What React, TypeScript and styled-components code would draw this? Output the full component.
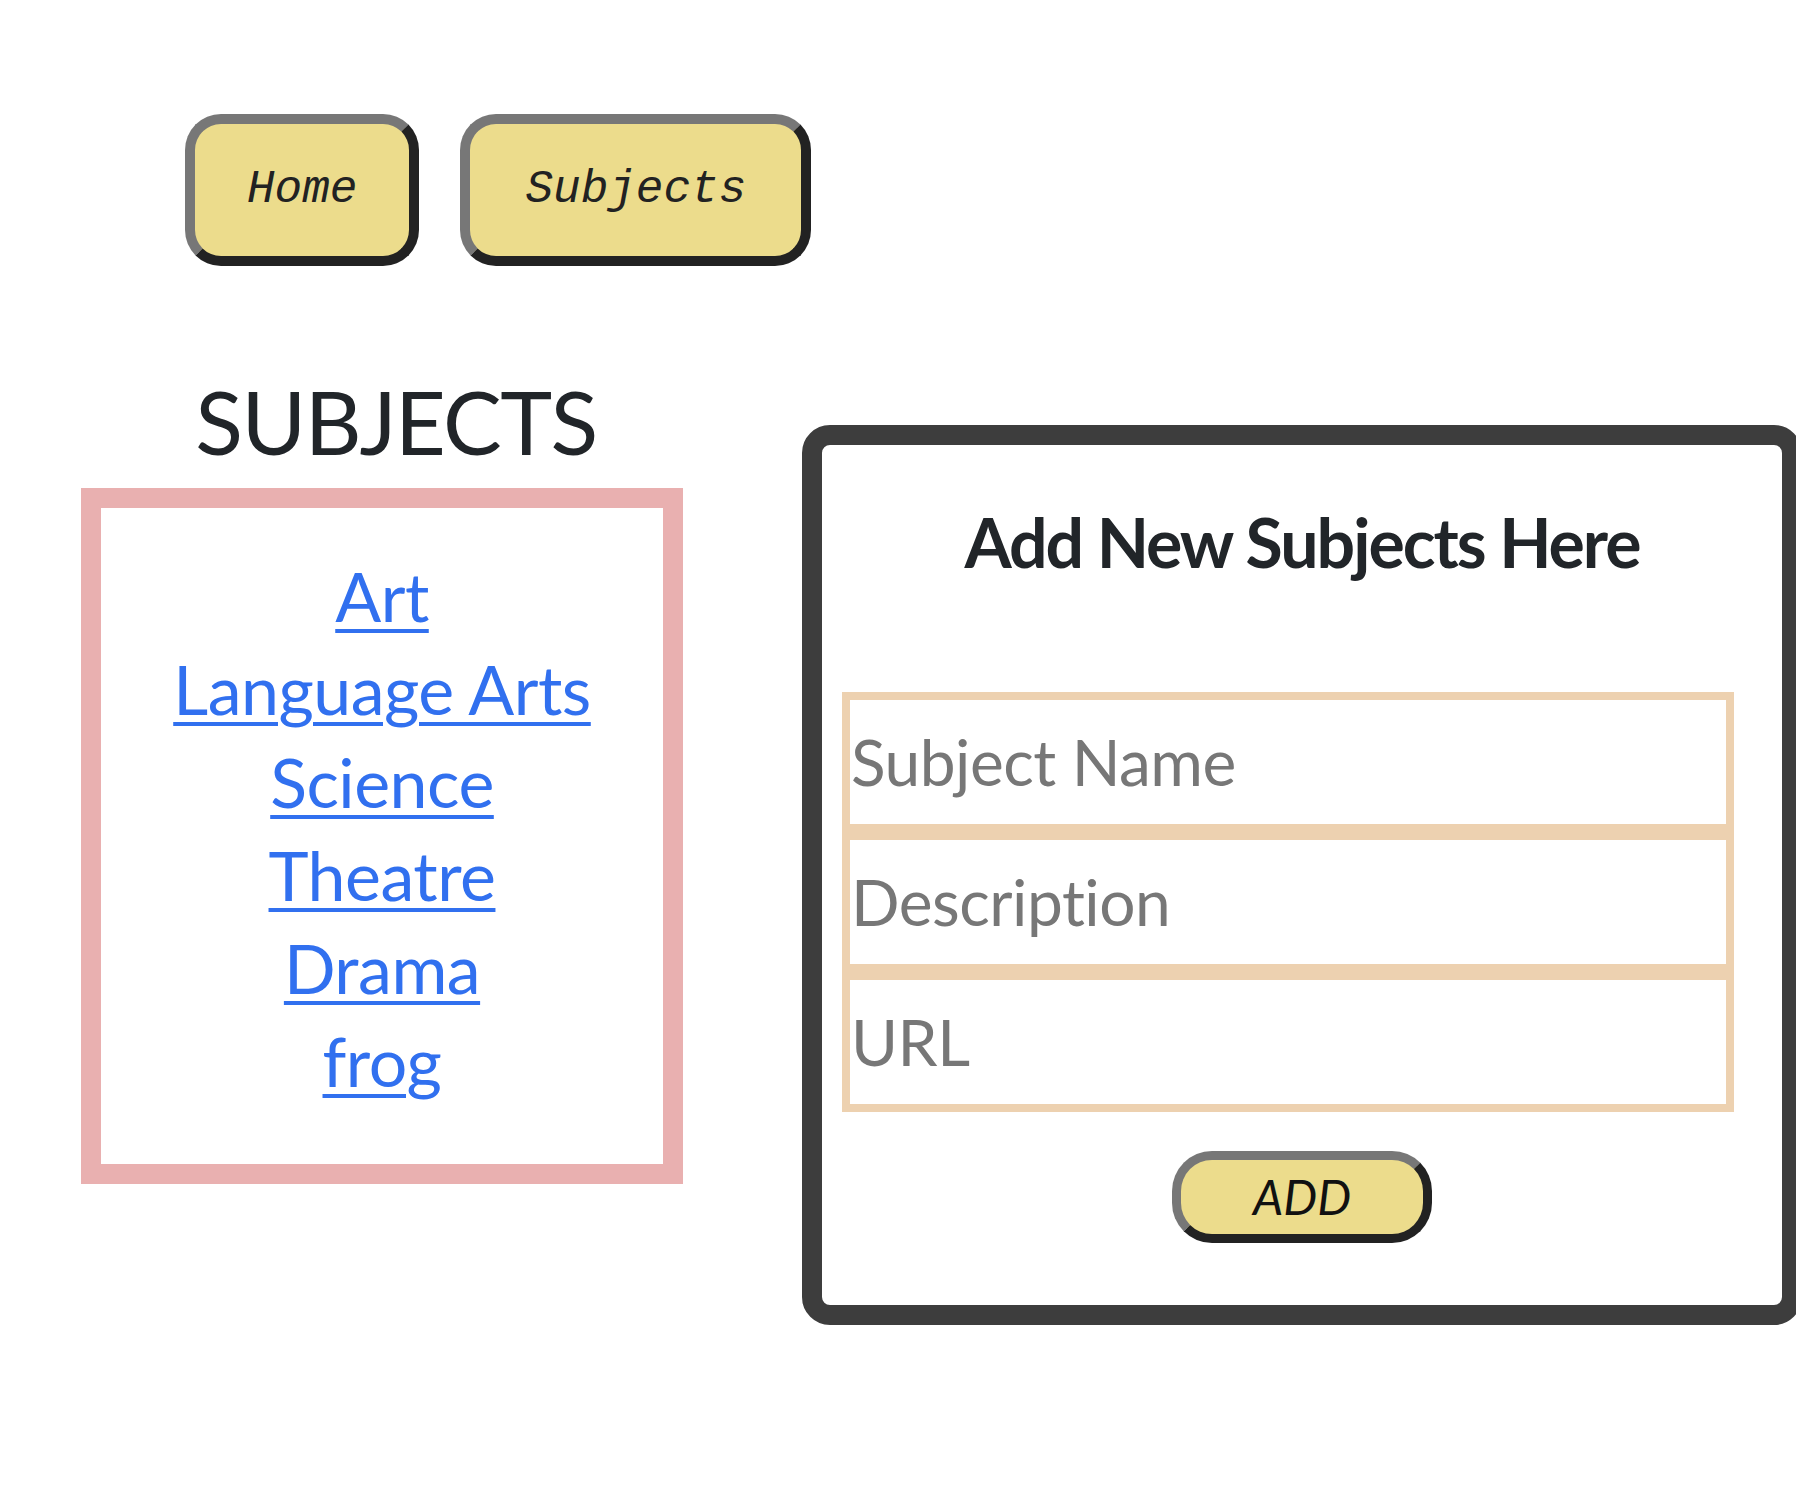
import React from 'react';
import styled, { createGlobalStyle } from 'styled-components';

const GlobalStyle = createGlobalStyle`
  html, body {
    margin: 0;
    padding: 0;
    background: #ffffff;
    overflow-x: hidden;
  }
  body {
    font-family: Lato, "Liberation Sans", sans-serif;
    font-variant-ligatures: no-common-ligatures;
    color: #212529;
  }
`;

const Page = styled.div`
  width: 1796px;
  min-height: 1494px;
`;

const Nav = styled.nav`
  display: flex;
  gap: 41px;
  padding: 114px 0 0 185px;
`;

const NavButton = styled.button`
  height: 152px;
  box-sizing: border-box;
  padding: 0 ${(p: { $wide?: boolean }) => (p.$wide ? '55px' : '52px')};
  border: 10px solid;
  border-color: #777777 #222222 #222222 #777777;
  border-radius: 36px;
  background: #ecdc8c;
  color: #222222;
  font-family: "Liberation Mono", "Courier New", monospace;
  font-style: italic;
  font-weight: 400;
  font-size: 46px;
  cursor: pointer;
`;

const Content = styled.main`
  display: flex;
  align-items: flex-start;
  margin-top: 103px;
  padding-left: 81px;
`;

const ListColumn = styled.section`
  width: 630px;
  flex-shrink: 0;
`;

const ListTitle = styled.h1`
  margin: 0 0 13px;
  width: 630px;
  text-align: center;
  font-size: 88px;
  letter-spacing: -1.5px;
  line-height: 1.2;
  font-weight: 400;
  color: #212529;
`;

const SubjectBox = styled.ul`
  width: 602px;
  height: 696px;
  box-sizing: border-box;
  margin: 0;
  padding: 41px 0 0;
  list-style: none;
  border: 20px solid #e9b0b0;
  display: flex;
  flex-direction: column;
  align-items: center;
`;

const SubjectItem = styled.li`
  line-height: 93px;
  font-size: 68px;
  letter-spacing: -0.5px;
`;

const SubjectLink = styled.a`
  color: #3170ef;
  text-decoration: underline;
  text-decoration-thickness: 4px;
  text-underline-offset: 7px;
`;

const FormCard = styled.form`
  flex-shrink: 0;
  margin: 56px 0 0 91px;
  width: 1000px;
  height: 900px;
  box-sizing: border-box;
  border: 20px solid #3d3d3d;
  border-radius: 28px;
  padding-top: 56px;
  display: flex;
  flex-direction: column;
`;

const FormTitle = styled.h2`
  margin: 0 0 109px;
  text-align: center;
  font-size: 68px;
  letter-spacing: -2px;
  line-height: 1.2;
  font-weight: 700;
  color: #212529;
`;

const Field = styled.input`
  display: block;
  width: 892px;
  height: 140px;
  box-sizing: border-box;
  margin-left: 20px;
  padding: 0 0 0 1px;
  border: 8px solid #edd1b0;
  background: #ffffff;
  font-family: Lato, "Liberation Sans", sans-serif;
  font-variant-ligatures: no-common-ligatures;
  font-size: 64px;
  letter-spacing: -0.5px;
  color: #212529;
  outline: none;

  &::placeholder {
    color: #777777;
  }
`;

const AddButton = styled.button`
  align-self: center;
  margin-top: 39px;
  width: 260px;
  height: 92px;
  box-sizing: border-box;
  border: 9px solid;
  border-color: #777777 #222222 #222222 #777777;
  border-radius: 40px;
  background: #ecdc8c;
  color: #111111;
  font-family: Lato, "Liberation Sans", sans-serif;
  font-style: italic;
  font-size: 48px;
  cursor: pointer;
`;

const subjects = ['Art', 'Language Arts', 'Science', 'Theatre', 'Drama', 'frog'];

const App: React.FC = () => {
  return (
    <>
      <GlobalStyle />
      <Page>
        <Nav>
          <NavButton>Home</NavButton>
          <NavButton $wide>Subjects</NavButton>
        </Nav>

        <Content>
          <ListColumn>
            <ListTitle>SUBJECTS</ListTitle>
            <SubjectBox>
              {subjects.map((name) => (
                <SubjectItem key={name}>
                  <SubjectLink href="#">{name}</SubjectLink>
                </SubjectItem>
              ))}
            </SubjectBox>
          </ListColumn>

          <FormCard onSubmit={(e) => e.preventDefault()}>
            <FormTitle>Add New Subjects Here</FormTitle>
            <Field placeholder="Subject Name" />
            <Field placeholder="Description" />
            <Field placeholder="URL" />
            <AddButton type="submit">ADD</AddButton>
          </FormCard>
        </Content>
      </Page>
    </>
  );
};

export default App;
